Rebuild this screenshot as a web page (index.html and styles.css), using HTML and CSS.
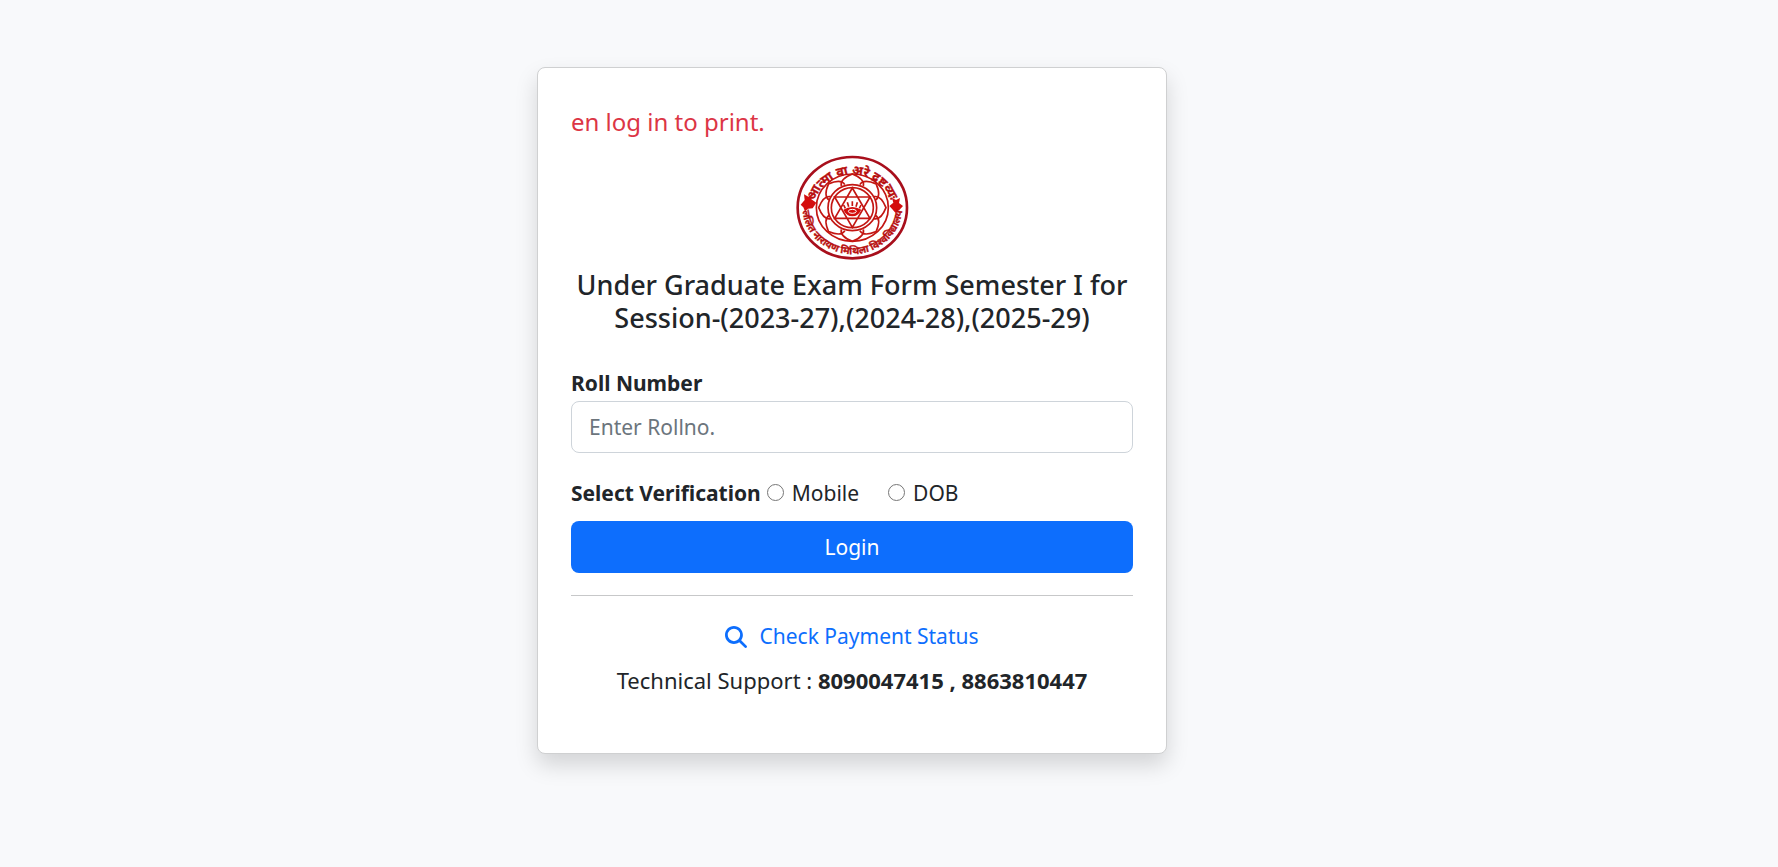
FILE: index.html
```html
<!DOCTYPE html>
<html lang="en">
<head>
    <meta charset="UTF-8">
    <meta name="viewport" content="width=device-width, initial-scale=1.0">
    <title>Exam Form Login</title>
    <link rel="stylesheet" href="styles.css">
</head>
<body>
    <main class="page">
        <div class="card">
            <div class="notice">en log in to print.</div>

            <div class="brand">
                <svg class="logo" viewBox="48 42 339 315" role="img" aria-label="University seal">
                    <defs>
                        <path id="arc-top" d="M100 210A117 109 0 1 1 334 210"></path>
                        <path id="arc-bottom" d="M68 180A150 143 0 1 0 366 180"></path>
                        <path id="petal" d="M-33 -65Q-38 -86 0 -101Q38 -86 33 -65"></path>
                    </defs>
                    <ellipse class="seal-rim" cx="217" cy="200" rx="164" ry="152"></ellipse>
                    <ellipse class="seal-line" cx="217" cy="200" rx="108" ry="101"></ellipse>
                    <g class="seal-line" transform="translate(217 200)">
                        <use href="#petal"></use>
                        <use href="#petal" transform="rotate(45)"></use>
                        <use href="#petal" transform="rotate(90)"></use>
                        <use href="#petal" transform="rotate(135)"></use>
                        <use href="#petal" transform="rotate(180)"></use>
                        <use href="#petal" transform="rotate(225)"></use>
                        <use href="#petal" transform="rotate(270)"></use>
                        <use href="#petal" transform="rotate(315)"></use>
                    </g>
                    <ellipse class="seal-line" cx="217" cy="200" rx="73" ry="69"></ellipse>
                    <ellipse class="seal-line" cx="217" cy="200" rx="63" ry="60"></ellipse>
                    <path class="seal-line" d="M217 141L270 232H164ZM217 259L164 168H270Z"></path>
                    <path class="seal-fill" d="M190 206Q217 190 244 206Q235 225 217 226Q199 225 190 206Z"></path>
                    <path class="seal-line" d="M196 202l-5 -10M206 197l-4 -13M217 195v-14M228 197l4 -13M238 202l5 -10"></path>
                    <ellipse class="seal-dot" cx="217" cy="211" rx="12" ry="6"></ellipse>
                    <path class="seal-fill" d="M72 160l13 7l11 -8l-2 16l15 10l-11 17l-14 1l-9 8l-5 -12l-8 -8l12 -14z"></path>
                    <path class="seal-fill" d="M336 171l12 6l12 -6l-3 15l12 9l-11 12l-12 8l-9 -10l-9 -10l12 -10z"></path>
                    <text class="seal-text"><textPath href="#arc-top" startOffset="50%">आत्मा वा अरे द्रष्टव्यः</textPath></text>
                    <text class="seal-text seal-text-small"><textPath href="#arc-bottom" startOffset="50%">ललित नारायण मिथिला विश्वविद्यालय</textPath></text>
                </svg>
            </div>

            <h1 class="title">Under Graduate Exam Form Semester I for Session-(2023-27),(2024-28),(2025-29)</h1>

            <form class="login-form">
                <label class="label" for="rollno">Roll Number</label>
                <input class="input" type="text" id="rollno" name="rollno" placeholder="Enter Rollno.">

                <div class="verification" role="radiogroup" aria-labelledby="verification-label">
                    <span class="label" id="verification-label">Select Verification</span>
                    <div class="option">
                        <input type="radio" id="mobile" name="verification" value="mobile">
                        <label for="mobile">Mobile</label>
                    </div>
                    <div class="option">
                        <input type="radio" id="dob" name="verification" value="dob">
                        <label for="dob">DOB</label>
                    </div>
                </div>

                <button class="login-button" type="submit">Login</button>
            </form>

            <hr class="divider">

            <a class="status-link" href="#">
                <svg class="icon" viewBox="0 0 512 512" fill="currentColor" aria-hidden="true">
                    <path d="M416 208c0 45.9-14.9 88.3-40 122.7L502.6 457.4c12.5 12.5 12.5 32.8 0 45.3s-32.8 12.5-45.3 0L330.7 376c-34.4 25.2-76.8 40-122.7 40C93.1 416 0 322.9 0 208S93.1 0 208 0S416 93.1 416 208zM208 352a144 144 0 1 0 0-288 144 144 0 1 0 0 288z"></path>
                </svg>
                Check Payment Status
            </a>
            <p class="support">Technical Support : <strong>8090047415 , 8863810447</strong></p>
        </div>
    </main>
</body>
</html>
```

FILE: styles.css
```css
* {
    box-sizing: border-box;
}

body {
    font-family: "Segoe UI", "Noto Sans", "Open Sans", sans-serif;
    font-size: 21px;
    line-height: 33px;
    color: #212529;
    background-color: #f8f9fb;
    margin: 0;
}

.page {
    display: flex;
    justify-content: center;
    padding: 67px 74px 67px 0;
}

.card {
    width: 100%;
    max-width: 630px;
    background: white;
    border: 1px solid #cfd0d1;
    border-radius: 8px;
    box-shadow: 0 11px 22px rgba(0, 0, 0, 0.15);
    padding: 37px 33px 56px;
}

.notice {
    color: #dc3545;
    font-size: 24px;
    overflow: hidden;
    white-space: nowrap;
}

.brand {
    display: flex;
    justify-content: center;
    margin: 17px 0 8px;
}

.logo {
    width: 113px;
    height: 105px;
}

.seal-rim {
    fill: white;
    stroke: #a80f1c;
    stroke-width: 8;
}

.seal-line {
    fill: none;
    stroke: #c31612;
    stroke-width: 5;
}

.seal-fill {
    fill: #d40d0d;
}

.seal-dot {
    fill: none;
    stroke: white;
    stroke-width: 3;
}

.seal-text {
    fill: #b80f0f;
    stroke: #b80f0f;
    stroke-width: 1;
    font-size: 38px;
    font-weight: bold;
    text-anchor: middle;
}

.seal-text-small {
    font-size: 30px;
}

.title {
    font-size: 27px;
    font-weight: 500;
    line-height: 33px;
    text-align: center;
    margin: 0 0 33px;
}

.label {
    font-weight: bold;
}

.login-form .label {
    display: block;
}

.input {
    display: block;
    width: 100%;
    height: 52px;
    padding: 8px 17px;
    border: 1px solid #ced4da;
    border-radius: 8px;
    font: inherit;
    color: inherit;
    margin-top: 1px;
}

.input::placeholder {
    color: #6c757d;
    opacity: 1;
}

.verification {
    display: flex;
    align-items: center;
    margin: 24px 0 11px;
}

.option {
    display: flex;
    align-items: center;
    gap: 8px;
    margin-right: 29px;
}

.option input {
    width: 17px;
    height: 17px;
    margin: 0 0 3px 6px;
}

.option + .option input {
    margin-left: 0;
}

.login-button {
    display: block;
    width: 100%;
    height: 52px;
    border: none;
    border-radius: 8px;
    background-color: #0d6efd;
    color: white;
    font: inherit;
    cursor: pointer;
}

.divider {
    border: 0;
    border-top: 1px solid #c7c8c9;
    margin: 22px 0 24px;
}

.status-link {
    display: flex;
    align-items: center;
    justify-content: center;
    gap: 12px;
    color: #0d6efd;
    text-decoration: none;
}

.icon {
    width: 22px;
    height: 22px;
}

.support {
    font-size: 22px;
    text-align: center;
    margin: 11px 0 0;
}
```
